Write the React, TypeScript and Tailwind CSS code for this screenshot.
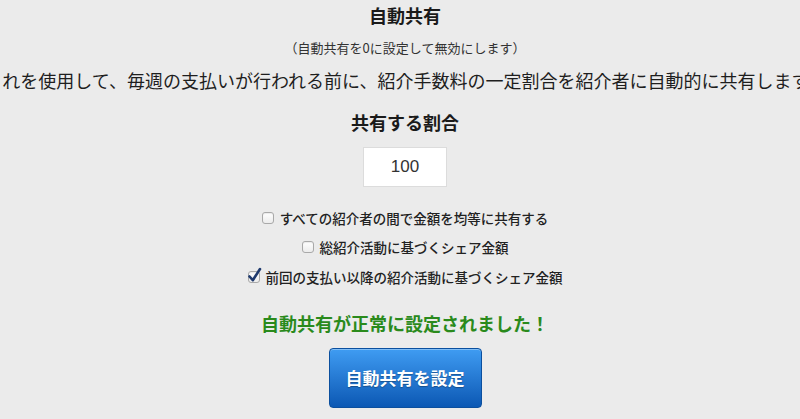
import React from "react";

const jp = { fontFamily: '"Noto Sans CJK JP", "Noto Sans", sans-serif' };

function Box({ checked }: { checked?: boolean }) {
  return (
    <span className="relative inline-block w-[12px] h-[12px] mr-[6px] shrink-0">
      <span className="absolute inset-0 rounded-[3px] border border-[#a9a9a9] bg-gradient-to-b from-white to-[#ececec] shadow-[inset_0_1px_1px_rgba(0,0,0,0.08)]" />
      {checked && (
        <svg className="absolute left-[-1px] top-[-4px]" width="15" height="16" viewBox="0 0 15 16">
          <path d="M2.5 9.5 L5.8 13.2 L13 2" fill="none" stroke="#1f3a6e" strokeWidth="2.6" strokeLinecap="round" strokeLinejoin="round" />
        </svg>
      )}
    </span>
  );
}

function Row({ label, checked, mt }: { label: string; checked?: boolean; mt: string }) {
  return (
    <div className={`flex items-center leading-[20px] text-[13.5px] font-medium text-[#222] ${mt}`} style={jp}>
      <Box checked={checked} />
      <span>{label}</span>
    </div>
  );
}

export default function App() {
  return (
    <div className="w-[800px] h-[419px] overflow-hidden bg-[#ebebeb]">
      <div className="flex flex-col items-center pl-[10px] text-[#1a1a1a]" style={jp}>
        <div className="text-[18px] font-bold leading-[30px]">自動共有</div>
        <div className="mt-[8px] text-[13px] leading-[20px] text-[#333]">（自動共有を0に設定して無効にします）</div>
        <div className="mt-[10px] text-[18px] leading-[24px] whitespace-nowrap text-[#1e1e1e]">
          これを使用して、毎週の支払いが行われる前に、紹介手数料の一定割合を紹介者に自動的に共有します。
        </div>
        <div className="mt-[18px] text-[18px] font-bold leading-[24px]">共有する割合</div>
        <div
          className="mt-[13px] w-[84px] h-[40px] bg-white border border-[#dcdcdc] flex items-center justify-center text-[17px] text-[#333]"
          style={{ fontFamily: '"Liberation Sans", Arial, sans-serif' }}
        >
          100
        </div>
        <Row mt="mt-[21px]" label="すべての紹介者の間で金額を均等に共有する" />
        <Row mt="mt-[9px]" label="総紹介活動に基づくシェア金額" />
        <Row mt="mt-[10px]" checked label="前回の支払い以降の紹介活動に基づくシェア金額" />
        <div className="mt-[24px] text-[18px] font-bold leading-[24px] text-[#2a8a1c]">
          自動共有が正常に設定されました！
        </div>
        <button
          className="mt-[13px] w-[153px] h-[60px] rounded-[4px] border border-[#0b4f9e] bg-gradient-to-b from-[#3f9cf2] to-[#0b58b4] text-white text-[17px] font-bold shadow-[inset_0_1px_0_rgba(255,255,255,0.35)] [text-shadow:0_1px_1px_rgba(0,0,0,0.3)]"
          style={jp}
        >
          自動共有を設定
        </button>
      </div>
    </div>
  );
}
